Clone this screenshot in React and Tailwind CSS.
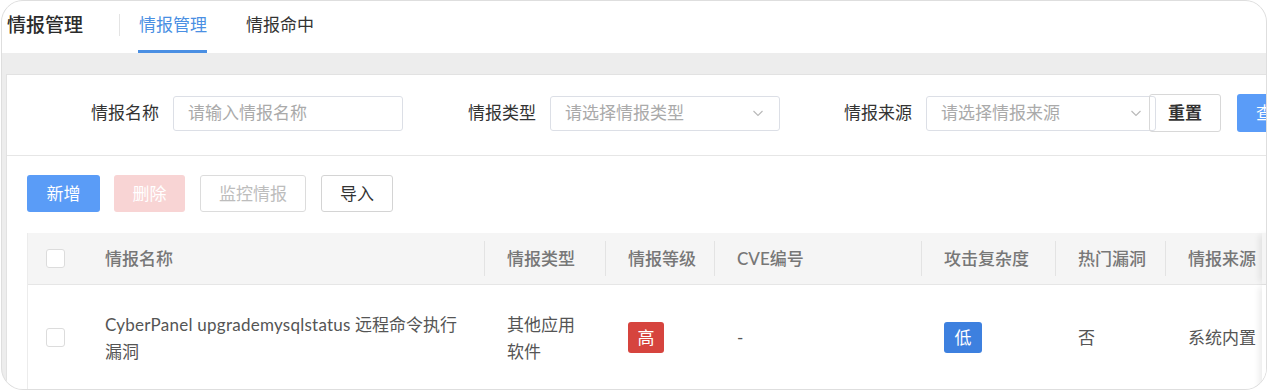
import React from "react";

const font = { fontFamily: '"Lato", "Noto Sans CJK SC", sans-serif' };

const Chevron = () => (
  <svg width="14" height="14" viewBox="0 0 14 14" fill="none" className="shrink-0">
    <path d="M2.5 5l4.5 4.5L11.5 5" stroke="#b8b8b8" strokeWidth="1.1" />
  </svg>
);

const Checkbox = () => (
  <div className="w-[19px] h-[19px] border border-[#dcdcdc] rounded-[3px] bg-white" />
);

const HeadCell = ({ width, children, sep = true }) => (
  <div className="flex items-center h-full shrink-0" style={{ width }}>
    {sep && <div className="w-px h-[35px] bg-[#e3e3e3]" />}
    <span className={(sep ? "ml-[22px]" : "ml-[20px]") + " text-[#777] font-medium whitespace-nowrap"}>{children}</span>
  </div>
);

const BodyCell = ({ width, children }) => (
  <div className="flex items-center h-full shrink-0 pl-[23px]" style={{ width }}>
    {children}
  </div>
);

const App = () => {
  return (
    <div className="w-[1268px] h-[392px] bg-white pl-[1px] text-[17px]" style={font}>
      <div className="w-[1266px] h-[390px] border border-[#dedede] rounded-[22px] overflow-hidden bg-[#ededed]">
        {/* header tabs */}
        <div className="h-[52px] bg-white flex items-center pl-[5px]">
          <span className="text-[19px] font-medium text-[#2b2b2b] mt-[-4px]">情报管理</span>
          <div className="w-px h-[22px] bg-[#e4e4e4] ml-[36px] mt-[-4px]" />
          <div className="ml-[19px] h-full flex flex-col justify-between">
            <span className="text-[#4a8fe3] pt-[11px]">情报管理</span>
            <div className="h-[3px] w-[69px] bg-[#4a8fe3] -ml-px" />
          </div>
          <span className="ml-[39px] text-[#333] mt-[-4px]">情报命中</span>
        </div>

        <div className="pt-[21px] pl-[4px]">
          <div className="w-[1320px] bg-white border border-[#e2e2e2]">
            {/* filters */}
            <div className="h-[81px] flex items-center pl-[84px] pb-[4px] border-b border-[#e6e6e6]">
              <span className="text-[#333]">情报名称</span>
              <div className="ml-[14px] w-[230px] h-[35px] border border-[#dcdfe6] rounded-[3px] flex items-center pl-[14px] text-[#aaa]">
                请输入情报名称
              </div>
              <span className="ml-[65px] text-[#333]">情报类型</span>
              <div className="ml-[14px] w-[230px] h-[35px] border border-[#dcdfe6] rounded-[3px] flex items-center justify-between pl-[14px] pr-[14px] text-[#aaa]">
                请选择情报类型
                <Chevron />
              </div>
              <span className="ml-[64px] text-[#333]">情报来源</span>
              <div className="ml-[14px] w-[230px] h-[35px] border border-[#dcdfe6] rounded-[3px] flex items-center justify-between pl-[14px] pr-[12px] text-[#aaa]">
                请选择情报来源
                <Chevron />
              </div>
              <button className="ml-[-7px] w-[72px] h-[38px] border border-[#d8d8d8] rounded-[3px] bg-transparent text-[#333] font-semibold">
                重置
              </button>
              <button className="ml-[16px] w-[72px] h-[38px] rounded-[3px] bg-[#5a9cf8] text-white">
                查询
              </button>
            </div>

            {/* actions */}
            <div className="pt-[19px] pl-[20px] flex">
              <button className="w-[73px] h-[37px] rounded-[3px] bg-[#5a9cf7] text-white">新增</button>
              <button className="ml-[14px] w-[71px] h-[37px] rounded-[3px] bg-[#f8d4d4] text-white">删除</button>
              <button className="ml-[15px] w-[106px] h-[37px] rounded-[3px] border border-[#dcdcdc] text-[#bdbdbd]">监控情报</button>
              <button className="ml-[15px] w-[72px] h-[37px] rounded-[3px] border border-[#d4d4d4] text-[#333]">导入</button>
            </div>

            {/* table */}
            <div className="mt-[21px] ml-[20px] border-l border-[#ececec]">
              <div className="h-[52px] bg-[#f5f5f5] border-b border-[#e6e6e6] flex items-center">
                <div className="w-[57px] pl-[18px] shrink-0 flex items-center">
                  <Checkbox />
                </div>
                <HeadCell width={399} sep={false}>情报名称</HeadCell>
                <HeadCell width={121}>情报类型</HeadCell>
                <HeadCell width={109}>情报等级</HeadCell>
                <HeadCell width={207}>CVE编号</HeadCell>
                <HeadCell width={134}>攻击复杂度</HeadCell>
                <HeadCell width={110}>热门漏洞</HeadCell>
                <HeadCell width={97}>情报来源</HeadCell>
                <div className="h-full w-[100px] shrink-0 bg-[#f5f5f5] shadow-[-5px_0_6px_-2px_rgba(0,0,0,0.08)]" />
              </div>
              <div className="h-[105px] flex items-center text-[#555]">
                <div className="w-[57px] pl-[18px] shrink-0 flex items-center">
                  <Checkbox />
                </div>
                <div className="w-[399px] shrink-0 pl-[20px] leading-[27px]">
                  <div className="w-[358px]">
                    <span className="tracking-[0.25px]">CyberPanel upgrademysqlstatus</span> 远程命令执行漏洞
                  </div>
                </div>
                <BodyCell width={121}>
                  <div className="w-[76px] leading-[27px]">其他应用软件</div>
                </BodyCell>
                <BodyCell width={109}>
                  <span className="w-[36px] h-[31px] rounded-[3px] bg-[#d6443e] text-white flex items-center justify-center">高</span>
                </BodyCell>
                <BodyCell width={207}>-</BodyCell>
                <BodyCell width={134}>
                  <span className="w-[38px] h-[31px] rounded-[3px] bg-[#3d80df] text-white flex items-center justify-center">低</span>
                </BodyCell>
                <BodyCell width={110}>否</BodyCell>
                <BodyCell width={97}>
                  <span className="whitespace-nowrap">系统内置</span>
                </BodyCell>
                <div className="h-full w-[100px] shrink-0 bg-white shadow-[-5px_0_6px_-2px_rgba(0,0,0,0.08)]" />
              </div>
            </div>
          </div>
        </div>
      </div>
    </div>
  );
};

export default App;
